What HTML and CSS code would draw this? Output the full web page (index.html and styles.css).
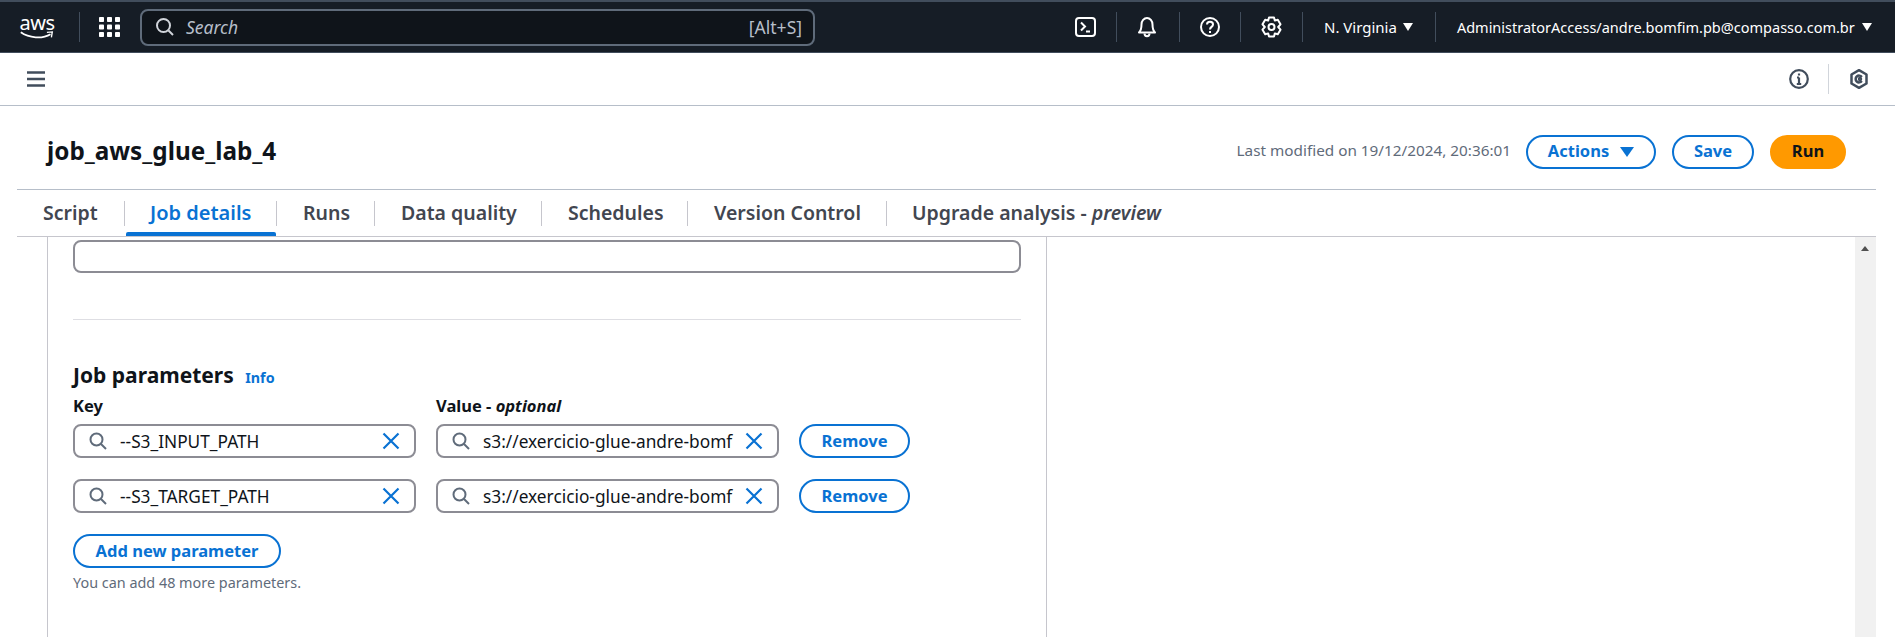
FILE: index.html
```html
<!DOCTYPE html>
<html lang="en">
<head>
<meta charset="utf-8">
<title>job_aws_glue_lab_4</title>
<link rel="stylesheet" href="styles.css">
</head>
<body>
<header class="topbar">
  <div class="logo">
    <span class="logo-text">aws</span>
    <svg class="swoosh" width="38" height="10" viewBox="0 0 38 10"><path d="M1 1.500C10 8 25 9 34 3.500" fill="none" stroke="#fff" stroke-width="2"/><path d="M30 1.500L36 1L35 7" fill="none" stroke="#fff" stroke-width="1.500"/></svg>
  </div>
  <span class="top-sep logo-sep"></span>
  <svg class="grid-icon" width="21" height="20" viewBox="0 0 21 20" fill="#fff"><rect x="0" y="0" width="5" height="5" rx=".8"/><rect x="8" y="0" width="5" height="5" rx=".8"/><rect x="16" y="0" width="5" height="5" rx=".8"/><rect x="0" y="7.500" width="5" height="5" rx=".8"/><rect x="8" y="7.500" width="5" height="5" rx=".8"/><rect x="16" y="7.500" width="5" height="5" rx=".8"/><rect x="0" y="15" width="5" height="5" rx=".8"/><rect x="8" y="15" width="5" height="5" rx=".8"/><rect x="16" y="15" width="5" height="5" rx=".8"/></svg>
  <div class="searchbox">
    <svg width="20" height="20" viewBox="0 0 20 20" fill="none" stroke="#d1d5db" stroke-width="2"><circle cx="8.500" cy="8.500" r="6.500"/><path d="M13.500 13.500L18 18"/></svg>
    <span class="search-ph">Search</span>
    <span class="search-key">[Alt+S]</span>
  </div>
  <div class="top-right">
    <svg class="ticon" width="21" height="20" viewBox="0 0 21 20" fill="none" stroke="#fff" stroke-width="2"><rect x="1" y="1" width="19" height="18" rx="3"/><path d="M6 5.500L10 9.500L6 13.500M11 14.500H15"/></svg>
    <span class="top-sep"></span>
    <svg class="ticon ticon-bell" width="20" height="22" viewBox="0 0 20 22" fill="none" stroke="#fff" stroke-width="2"><path d="M2 16.500C4 14.500 4.500 12 4.500 8.500C4.500 5 7 2 10 2C13 2 15.500 5 15.500 8.500C15.500 12 16 14.500 18 16.500Z" stroke-linejoin="round"/><path d="M7.500 17.500C7.500 21 12.500 21 12.500 17.500"/></svg>
    <span class="top-sep"></span>
    <svg class="ticon" width="20" height="20" viewBox="0 0 20 20" fill="none" stroke="#fff" stroke-width="2"><circle cx="10" cy="10" r="9"/><path d="M7 7.500C7 3.800 13 3.800 13 7.500C13 10 10 9.800 10 12.500"/><path d="M10 14V16"/></svg>
    <span class="top-sep"></span>
    <svg class="ticon" width="21" height="22" viewBox="0 0 21 22" fill="none" stroke="#fff" stroke-width="2" stroke-linejoin="round"><path d="M8 1.500H13L13.800 4.600L16.800 3.700L19.500 8.300L17.200 11L19.500 13.700L16.800 18.300L13.800 17.400L13 20.500H8L7.200 17.400L4.200 18.300L1.500 13.700L3.800 11L1.500 8.300L4.200 3.700L7.200 4.600Z"/><circle cx="10.500" cy="11" r="3"/></svg>
    <span class="top-sep"></span>
    <span class="region">N. Virginia</span><span class="caret-w region-caret"></span>
    <span class="top-sep"></span>
    <span class="account">AdministratorAccess/andre.bomfim.pb@compasso.com.br</span><span class="caret-w account-caret"></span>
  </div>
</header>

<div class="subbar">
  <svg class="menu-icon" width="18" height="16" viewBox="0 0 18 16" fill="none" stroke="#414d5c" stroke-width="2.400"><path d="M0 1.500H18M0 8H18M0 14.500H18"/></svg>
  <div class="subbar-right">
    <svg width="20" height="20" viewBox="0 0 20 20" fill="none" stroke="#414d5c" stroke-width="2.200"><circle cx="10" cy="10" r="8.800"/><path d="M10 8.500V15M7.800 15H12.200M8 8.500H10"/><path d="M10 4.500V6.500"/></svg>
    <span class="sub-sep"></span>
    <svg width="18" height="20" viewBox="0 0 18 20" fill="none" stroke="#414d5c" stroke-width="2.500"><path d="M9 1.200L16.500 5.500V14.500L9 18.800L1.500 14.500V5.500Z" stroke-linejoin="round"/><path d="M11.800 8A3.400 3.400 0 1 0 11.800 12"/><circle cx="10" cy="10" r="1"/></svg>
  </div>
</div>

<main class="page">
  <div class="pagehead">
    <h1 class="title">job_aws_glue_lab_4</h1>
    <div class="actions">
      <span class="modified">Last modified on 19/12/2024, 20:36:01</span>
      <button class="btn btn-actions">Actions <span class="caret-b"></span></button>
      <button class="btn btn-save">Save</button>
      <button class="btn btn-run">Run</button>
    </div>
  </div>

  <nav class="tabs">
    <span class="tab tab-script">Script</span>
    <span class="tab tab-active tab-job">Job details</span>
    <span class="tab tab-runs">Runs</span>
    <span class="tab tab-dq">Data quality</span>
    <span class="tab tab-sched">Schedules</span>
    <span class="tab tab-vc">Version Control</span>
    <span class="tab tab-up">Upgrade analysis - <em>preview</em></span>
  </nav>

  <div class="workspace">
    <section class="panel">
      <div class="blank-input"></div>
      <hr class="divider">
      <h2 class="params-title">Job parameters <a class="info">Info</a></h2>
      <div class="params-grid">
        <span class="label">Key</span>
        <span class="label">Value - <em>optional</em></span>
        <span></span>

        <div class="field"><svg class="s-icon" width="18" height="18" viewBox="0 0 18 18" fill="none" stroke="#5f6b7a" stroke-width="2"><circle cx="7.500" cy="7.500" r="6"/><path d="M12 12L17 17"/></svg><span class="field-text">--S3_INPUT_PATH</span><svg class="x-icon" width="18" height="18" viewBox="0 0 18 18" fill="none" stroke="#0972d3" stroke-width="2.200"><path d="M1.500 1.500L16.500 16.500M16.500 1.500L1.500 16.500"/></svg></div>
        <div class="field"><svg class="s-icon" width="18" height="18" viewBox="0 0 18 18" fill="none" stroke="#5f6b7a" stroke-width="2"><circle cx="7.500" cy="7.500" r="6"/><path d="M12 12L17 17"/></svg><span class="field-text">s3://exercicio-glue-andre-bomf</span><svg class="x-icon" width="18" height="18" viewBox="0 0 18 18" fill="none" stroke="#0972d3" stroke-width="2.200"><path d="M1.500 1.500L16.500 16.500M16.500 1.500L1.500 16.500"/></svg></div>
        <button class="btn btn-remove">Remove</button>

        <div class="field"><svg class="s-icon" width="18" height="18" viewBox="0 0 18 18" fill="none" stroke="#5f6b7a" stroke-width="2"><circle cx="7.500" cy="7.500" r="6"/><path d="M12 12L17 17"/></svg><span class="field-text">--S3_TARGET_PATH</span><svg class="x-icon" width="18" height="18" viewBox="0 0 18 18" fill="none" stroke="#0972d3" stroke-width="2.200"><path d="M1.500 1.500L16.500 16.500M16.500 1.500L1.500 16.500"/></svg></div>
        <div class="field"><svg class="s-icon" width="18" height="18" viewBox="0 0 18 18" fill="none" stroke="#5f6b7a" stroke-width="2"><circle cx="7.500" cy="7.500" r="6"/><path d="M12 12L17 17"/></svg><span class="field-text">s3://exercicio-glue-andre-bomf</span><svg class="x-icon" width="18" height="18" viewBox="0 0 18 18" fill="none" stroke="#0972d3" stroke-width="2.200"><path d="M1.500 1.500L16.500 16.500M16.500 1.500L1.500 16.500"/></svg></div>
        <button class="btn btn-remove">Remove</button>
      </div>
      <button class="btn btn-add">Add new parameter</button>
      <p class="helper">You can add 48 more parameters.</p>
    </section>
    <div class="side-blank"></div>
    <div class="scrollbar"><span class="scroll-up"></span></div>
  </div>
</main>
</body>
</html>
```

FILE: styles.css
```css
* { box-sizing: border-box; }
html, body { margin: 0; padding: 0; height: 637px; overflow: hidden; background: #fff; }
body { font-family: "Noto Sans", "Open Sans", "Liberation Sans", sans-serif; color: #0f141a; }

.topbar {
  height: 53px;
  background: #161d26;
  border-top: 2px solid #414d5c;
  border-bottom: 1px solid #414d5c;
  display: flex;
  align-items: center;
  padding-left: 18px;
  color: #fff;
}
.logo { width: 38px; height: 25px; display: flex; flex-direction: column; align-items: center; }
.logo-text { font-size: 20px; line-height: 16px; letter-spacing: -0.5px; }
.swoosh { margin-top: 0; }
.top-sep { width: 1px; height: 30px; background: #414d5c; flex: none; }
.logo-sep { margin-left: 23px; margin-right: 19px; }
.grid-icon { margin-right: 20px; flex: none; }
.searchbox {
  width: 675px;
  height: 37px;
  background: #0f141a;
  border: 2px solid #5f6b7a;
  border-radius: 8px;
  display: flex;
  align-items: center;
  padding: 0 11px 0 13px;
  flex: none;
}
.search-ph { margin-left: 11px; font-size: 17.500px; font-style: italic; color: #b6bec9; }
.search-key { margin-left: auto; font-size: 17.500px; color: #b6bec9; }
.top-right { display: flex; align-items: center; margin-left: 260px; flex: none; }
.ticon { flex: none; margin: 0 20px; }
.top-right .ticon:first-child { margin-left: 0; }
.ticon-bell { margin-right: 22px; }
.region { margin-left: 21px; font-size: 15px; white-space: nowrap; }
.region-caret { margin-left: 6px; margin-right: 22px; }
.account { margin-left: 21px; font-size: 14.500px; white-space: nowrap; }
.account-caret { margin-left: 7px; }
.caret-w { width: 0; height: 0; border-left: 5px solid transparent; border-right: 5px solid transparent; border-top: 8px solid #fff; flex: none; }

.subbar {
  height: 53px;
  border-bottom: 1px solid #b6bec9;
  display: flex;
  align-items: center;
  padding: 0 27px;
  background: #fff;
}
.menu-icon { flex: none; }
.subbar-right { margin-left: auto; display: flex; align-items: center; gap: 19px; }
.sub-sep { width: 1px; height: 30px; background: #d1d5db; margin-right: 2px; }

.page { padding: 0 19px 0 17px; }
.pagehead {
  height: 83px;
  display: flex;
  align-items: center;
  padding: 8px 30px 0;
}
.title { margin: 0 0 2px; font-size: 24.300px; line-height: 30px; font-weight: 700; }
.actions { margin-left: auto; display: flex; align-items: center; }
.modified { font-size: 15.300px; color: #5f6b7a; margin-right: 15px; margin-bottom: 4px; white-space: nowrap; }
.btn {
  font-family: inherit;
  font-size: 16.500px;
  font-weight: 700;
  height: 34px;
  border-radius: 17px;
  border: 2px solid #0972d3;
  background: #fff;
  color: #0972d3;
  padding: 0 0 2px;
  display: inline-flex;
  align-items: center;
  justify-content: center;
}
.btn-actions { width: 130px; margin-right: 16px; }
.btn-save { width: 82px; margin-right: 16px; }
.btn-run { width: 76px; background: #ff9900; border-color: #ff9900; color: #0f141a; }
.caret-b { width: 0; height: 0; margin-left: 11px; margin-top: 2px; border-left: 7px solid transparent; border-right: 7px solid transparent; border-top: 10px solid #0972d3; }

.tabs {
  height: 48px;
  border-top: 1px solid #b6bec9;
  border-bottom: 1px solid #c6c6cd;
  display: flex;
  align-items: stretch;
  font-size: 19.500px;
  font-weight: 600;
  color: #424650;
  padding-top: 11px;
}
.tab { display: flex; align-items: center; height: 25px; padding-bottom: 2px; white-space: nowrap; border-right: 1px solid #c6c6cd; position: relative; }
.tab em { margin-left: 5px; }
.tab-script { width: 108px; padding-left: 26px; }
.tab-job { width: 152px; padding-left: 25px; color: #0972d3; font-size: 20px; }
.tab-runs { width: 98px; padding-left: 26px; }
.tab-dq { width: 167px; padding-left: 26px; }
.tab-sched { width: 146px; padding-left: 26px; }
.tab-vc { width: 199px; padding-left: 26px; }
.tab-up { border-right: 0; padding-left: 25px; }
.tab-active::after {
  content: "";
  position: absolute;
  left: 1px;
  right: 0;
  top: 31px;
  height: 4px;
  background: #0972d3;
  border-radius: 2px 2px 0 0;
}

.workspace { display: flex; height: 401px; }
.panel {
  width: 1000px;
  margin-left: 30px;
  border-left: 1px solid #c6c6cd;
  border-right: 1px solid #c6c6cd;
  padding: 3px 25px 0;
  flex: none;
}
.blank-input { height: 33px; width: 948px; border: 2px solid #8c8c94; border-radius: 8px; }
.divider { margin: 46px 0 0; width: 948px; border: 0; border-top: 1px solid #dedee3; }
.params-title { margin: 43px 0 0; font-size: 21px; line-height: 24px; font-weight: 700; }
.info { margin-left: 6px; font-size: 14.300px; font-weight: 700; color: #0972d3; }
.params-grid {
  display: grid;
  grid-template-columns: 343px 343px 111px;
  column-gap: 20px;
  row-gap: 21px;
  margin-top: 6px;
  align-items: start;
}
.params-grid .label { font-size: 16.500px; line-height: 20px; font-weight: 700; margin-bottom: -13px; }
.field {
  height: 34px;
  border: 2px solid #8c8c94;
  border-radius: 8px;
  display: flex;
  align-items: center;
  padding: 0 14px;
  font-size: 17.300px;
  min-width: 0;
}
.s-icon { flex: none; }
.field-text { margin-left: 13px; white-space: nowrap; overflow: hidden; flex: 1; }
.x-icon { flex: none; margin-left: 6px; }
.btn-remove { width: 111px; margin-left: 0; }
.btn-add { width: 208px; margin-top: 21px; display: flex; }
.helper { margin: 6px 0 0; font-size: 14.400px; line-height: 18px; color: #5f6b7a; }

.side-blank { flex: 1; }
.scrollbar { width: 21px; flex: none; background: #f1f1f1; position: relative; }
.scroll-up { position: absolute; left: 6px; top: 9px; width: 0; height: 0; border-left: 4.500px solid transparent; border-right: 4.500px solid transparent; border-bottom: 5px solid #505050; }
```
